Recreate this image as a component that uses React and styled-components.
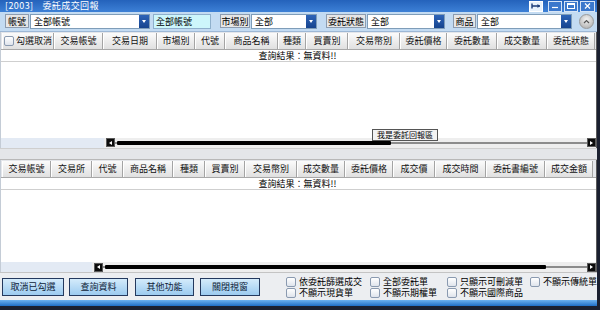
import styled, { createGlobalStyle } from "styled-components";

const GlobalStyle = createGlobalStyle`
  body {
    margin: 0;
    background: #1b2030;
    font-family: "Noto Sans CJK TC", "Liberation Sans", sans-serif;
  }
`;

const Window = styled.div`
  width: 597px;
  height: 306px;
  display: flex;
  flex-direction: column;
  background: #e9ecf0;
  overflow: hidden;
`;

const TitleBar = styled.div`
  height: 12px;
  display: flex;
  align-items: center;
  padding-left: 5px;
  background: linear-gradient(#2462bb, #3d80d6);
  color: #fff;
  font-size: 9px;
  line-height: 12px;
`;

const TitleText = styled.span`
  margin-left: ${(p) => p.$ml || 0}px;
  letter-spacing: 0.4px;
`;

const Controls = styled.div`
  margin-left: auto;
  display: flex;
  gap: 2px;
  padding-right: 2px;
`;

const CtrlBtn = styled.div`
  width: ${(p) => p.$w || 12}px;
  height: 9px;
  border: 1px solid ${(p) => (p.$active ? "#ffffff" : "#d6e4f6")};
  background: ${(p) => (p.$active ? "#e8f2fc" : "#3b78cc")};
  display: flex;
  align-items: center;
  justify-content: center;
  margin-right: ${(p) => p.$mr || 0}px;
`;

const FilterBar = styled.div`
  height: 19px;
  display: flex;
  align-items: center;
  padding-left: 5px;
  background: #c3dbf2;
  border-bottom: 1px solid #9db8d6;
  font-size: 9px;
`;

const Field = styled.div`
  display: flex;
  align-items: center;
  gap: 1px;
  margin-left: ${(p) => p.$ml || 0}px;
`;

const Label = styled.div`
  width: ${(p) => p.$w}px;
  height: 14px;
  box-sizing: border-box;
  background: #e6e6e6;
  border: 1px solid #8c9cb0;
  display: flex;
  align-items: center;
  justify-content: center;
`;

const Select = styled.div`
  width: ${(p) => p.$w}px;
  height: 15px;
  box-sizing: border-box;
  background: #fff;
  border: 1px solid #7f9db9;
  display: flex;
  align-items: center;
  padding-left: 3px;
`;

const SelectText = styled.span`
  flex: 1;
`;

const DropBtn = styled.div`
  width: 10px;
  height: 13px;
  background: linear-gradient(#2d64b8, #16448e);
  display: flex;
  align-items: center;
  justify-content: center;
  &::after {
    content: "";
    border-left: 2.5px solid transparent;
    border-right: 2.5px solid transparent;
    border-top: 3px solid #fff;
  }
`;

const TextInput = styled.div`
  width: ${(p) => p.$w}px;
  height: 15px;
  box-sizing: border-box;
  margin-left: ${(p) => p.$ml || 0}px;
  background: #cdf6fb;
  border: 1px solid #8fb0cc;
  display: flex;
  align-items: center;
  padding-left: 2px;
`;

const RoundBtn = styled.div`
  width: 13px;
  height: 13px;
  margin-left: ${(p) => p.$ml || 0}px;
  border-radius: 50%;
  background: radial-gradient(circle at 50% 35%, #f4f4f4, #a8a8a8);
  border: 1px solid #9a9a9a;
  display: flex;
  align-items: center;
  justify-content: center;
`;

const Section = styled.div`
  height: ${(p) => p.$h}px;
  display: flex;
  flex-direction: column;
  position: relative;
  border-left: 1px solid #c4ccd6;
  border-right: 1px solid #5a5a5a;
`;

const HeaderRow = styled.div`
  height: 18px;
  display: flex;
  padding-left: 1px;
  padding-top: 1px;
  box-sizing: border-box;
  background: #e4e6ea;
  border-bottom: 1px solid #a8a8a8;
`;

const HeaderCell = styled.div`
  width: ${(p) => p.$w}px;
  flex: none;
  box-sizing: border-box;
  border-left: 1px solid #fff;
  border-right: 1px solid #a4a4a4;
  background: linear-gradient(#fbfbfb, #e0e0e0);
  font-size: 9px;
  color: #111;
  display: flex;
  align-items: center;
  justify-content: center;
  gap: 2px;
  white-space: nowrap;
`;

const CheckBox = styled.span`
  width: 8px;
  height: 8px;
  flex: none;
  border: 1px solid #8a9ab0;
  border-radius: 2px;
  background: linear-gradient(#ffffff, #dfe4ec);
`;

const ResultRow = styled.div`
  height: 11px;
  line-height: 11px;
  background: #fff;
  font-size: 9px;
  text-align: center;
  padding-right: 2px;
  border-bottom: 1px solid #cfcfcf;
`;

const Body = styled.div`
  flex: 1;
  background: #fff;
`;

const Tooltip = styled.div`
  position: absolute;
  left: ${(p) => p.$x}px;
  top: ${(p) => p.$y}px;
  height: 10px;
  line-height: 10px;
  padding: 0 4px;
  background: #f2f2f2;
  border: 1px solid #555;
  font-size: 8px;
  z-index: 2;
`;

const ScrollRow = styled.div`
  height: 10px;
  display: flex;
  align-items: center;
  background: #eeeeee;
`;

const ScrollPad = styled.div`
  width: ${(p) => p.$w}px;
  height: 100%;
  background: #e3eaf4;
  margin-right: 2px;
`;

const ArrowBtn = styled.div`
  width: 9px;
  height: 9px;
  box-sizing: border-box;
  flex: none;
  background: #0c0c0c;
  border: 1px solid #5a5a5a;
  display: flex;
  align-items: center;
  justify-content: center;
  &::after {
    content: "";
    border-top: 2px solid transparent;
    border-bottom: 2px solid transparent;
    ${(p) =>
      p.$dir === "left"
        ? "border-right: 3px solid #fff;"
        : "border-left: 3px solid #fff;"}
  }
`;

const Track = styled.div`
  flex: 1;
  height: 100%;
  display: flex;
  align-items: center;
  padding: 0 2px;
  background: linear-gradient(
    to bottom,
    transparent 4px,
    #8c8c8c 4px,
    #8c8c8c 6px,
    transparent 6px
  );
`;

const Thumb = styled.div`
  height: 4px;
  background: #000;
  border-radius: 1px;
`;

const Splitter = styled.div`
  height: 12px;
  background: #e4e6e9;
  border-top: 1px solid #cfcfcf;
  border-bottom: 1px solid #b8b8b8;
  box-sizing: border-box;
`;

const BottomBar = styled.div`
  height: 28px;
  display: flex;
  align-items: center;
  padding-left: 2px;
  background: #eceef1;
  border-top: 1px solid #c4c4c4;
  box-sizing: border-box;
`;

const ActionButton = styled.div`
  width: ${(p) => p.$w}px;
  height: 18px;
  box-sizing: border-box;
  margin-left: ${(p) => p.$ml || 0}px;
  border: 1px solid #24395e;
  background: linear-gradient(#d4ebfb, #9ccbf0);
  font-size: 9px;
  color: #0e1c38;
  display: flex;
  align-items: center;
  justify-content: center;
`;

const Options = styled.div`
  margin-left: ${(p) => p.$ml || 0}px;
  display: grid;
  grid-template-columns: 84px 77px 83px 64px;
  grid-auto-rows: 10px;
  row-gap: 1px;
  margin-top: 1px;
`;

const Option = styled.div`
  display: flex;
  align-items: center;
  gap: 3px;
  font-size: 9px;
  line-height: 10px;
  white-space: nowrap;
  height: 10px;
`;

const StatusStrip = styled.div`
  height: 6px;
  background: linear-gradient(#6db2f0, #1f6ec6);
`;

const topCols = [
  ["勾選取消", 52, true],
  ["交易帳號", 49],
  ["交易日期", 54],
  ["市場別", 38],
  ["代號", 30],
  ["商品名稱", 53],
  ["種類", 28],
  ["買賣別", 42],
  ["交易幣別", 52],
  ["委託價格", 47],
  ["委託數量", 50],
  ["成交數量", 50],
  ["委託狀態", 48],
];

const bottomCols = [
  ["交易帳號", 49],
  ["交易所", 41],
  ["代號", 31],
  ["商品名稱", 50],
  ["種類", 32],
  ["買賣別", 40],
  ["交易幣別", 52],
  ["成交數量", 48],
  ["委託價格", 48],
  ["成交價", 42],
  ["成交時間", 51],
  ["委託書編號", 59],
  ["成交金額", 48],
];

const options = [
  "依委託篩選成交",
  "全部委託單",
  "只顯示可刪減單",
  "不顯示傳統單",
  "不顯示現貨單",
  "不顯示期權單",
  "不顯示國際商品",
];

const Grid = ({ cols, h, thumb, pad, tip }) => (
  <Section $h={h}>
    <HeaderRow>
      {cols.map(([name, w, check]) => (
        <HeaderCell key={name} $w={w}>
          {check && <CheckBox />}
          {name}
        </HeaderCell>
      ))}
    </HeaderRow>
    <ResultRow>查詢結果：無資料!!</ResultRow>
    <Body />
    {tip && (
      <Tooltip $x={371} $y={97}>
        我是委託回報區
      </Tooltip>
    )}
    <ScrollRow>
      <ScrollPad $w={pad} />
      <ArrowBtn $dir="left" />
      <Track>
        <Thumb style={{ width: thumb }} />
      </Track>
      <ArrowBtn $dir="right" />
    </ScrollRow>
  </Section>
);

const App = () => {
  return (
    <>
      <GlobalStyle />
      <Window>
        <TitleBar>
          <TitleText>[2003]</TitleText>
          <TitleText $ml={9}>委託成交回報</TitleText>
          <Controls>
            <CtrlBtn $active $mr={3}>
              <svg width="10" height="6" viewBox="0 0 10 6">
                <path d="M1 0.5v5M1 3h8" stroke="#1a3c78" strokeWidth="1.4" />
                <path d="M9 3l-2.5-2v4z" fill="#1a3c78" />
              </svg>
            </CtrlBtn>
            <CtrlBtn>
              <svg width="8" height="6" viewBox="0 0 8 6">
                <path d="M1 4.5h6" stroke="#fff" strokeWidth="1.2" />
              </svg>
            </CtrlBtn>
            <CtrlBtn>
              <svg width="8" height="6" viewBox="0 0 8 6">
                <rect x="0.5" y="0.5" width="7" height="5" fill="none" stroke="#fff" />
                <path d="M0.5 1.5h7" stroke="#fff" />
              </svg>
            </CtrlBtn>
            <CtrlBtn $w={13}>
              <svg width="7" height="6" viewBox="0 0 7 6">
                <path d="M1 0.5l5 5M6 0.5l-5 5" stroke="#fff" strokeWidth="1.2" />
              </svg>
            </CtrlBtn>
          </Controls>
        </TitleBar>

        <FilterBar>
          <Field>
            <Label $w={24}>帳號</Label>
            <Select $w={120}>
              <SelectText>全部帳號</SelectText>
              <DropBtn />
            </Select>
          </Field>
          <TextInput $w={58} $ml={3}>
            全部帳號
          </TextInput>
          <Field $ml={9}>
            <Label $w={30}>市場別</Label>
            <Select $w={66}>
              <SelectText>全部</SelectText>
              <DropBtn />
            </Select>
          </Field>
          <Field $ml={9}>
            <Label $w={40}>委託狀態</Label>
            <Select $w={78}>
              <SelectText>全部</SelectText>
              <DropBtn />
            </Select>
          </Field>
          <Field $ml={8}>
            <Label $w={23}>商品</Label>
            <Select $w={95}>
              <SelectText>全部</SelectText>
              <DropBtn />
            </Select>
          </Field>
          <RoundBtn $ml={7}>
            <svg width="7" height="5" viewBox="0 0 7 5">
              <path d="M1 4l2.5-2.5L6 4" fill="none" stroke="#555" strokeWidth="1.2" />
            </svg>
          </RoundBtn>
        </FilterBar>

        <Grid cols={topCols} h={116} pad={103} thumb={274} tip />
        <Splitter />
        <Grid cols={bottomCols} h={113} pad={91} thumb={441} />

        <BottomBar>
          <ActionButton $w={62}>取消已勾選</ActionButton>
          <ActionButton $w={59} $ml={5}>
            查詢資料
          </ActionButton>
          <ActionButton $w={59} $ml={7}>
            其他功能
          </ActionButton>
          <ActionButton $w={60} $ml={6}>
            關閉視窗
          </ActionButton>
          <Options $ml={26}>
            {options.map((o) => (
              <Option key={o}>
                <CheckBox />
                {o}
              </Option>
            ))}
          </Options>
        </BottomBar>
        <StatusStrip />
      </Window>
    </>
  );
};

export default App;
